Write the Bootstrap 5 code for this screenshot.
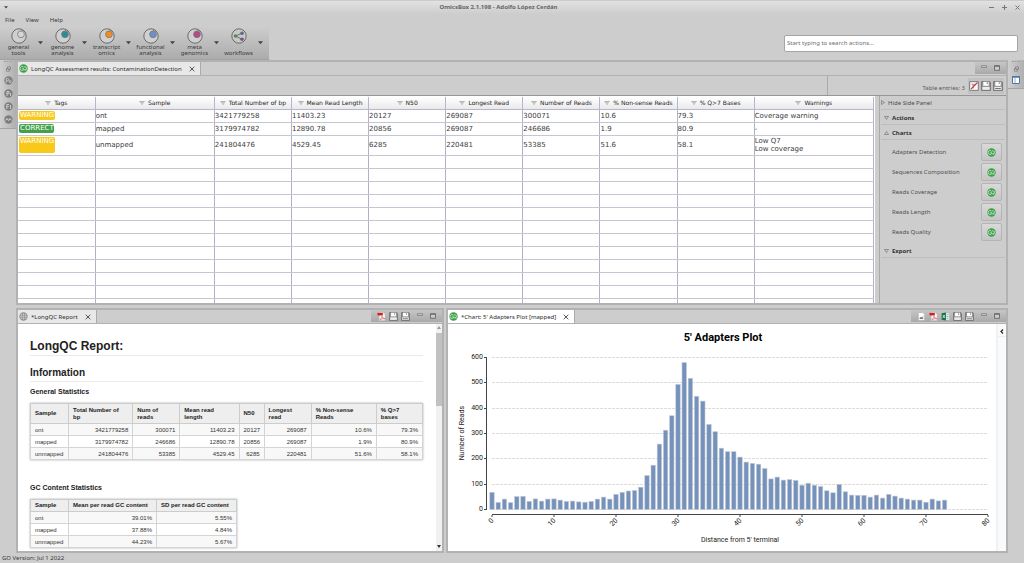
<!DOCTYPE html>
<html lang="en">
<head>
<meta charset="utf-8">
<meta name="viewport" content="width=device-width, initial-scale=1">
<title>OmicsBox 2.1.198 - Adolfo López Cerdán</title>
<link rel="stylesheet" href="https://cdn.jsdelivr.net/npm/bootstrap@5.3.0/dist/css/bootstrap.min.css">
<style>
:root{--ui:"Noto Sans","Open Sans",sans-serif;--bg:#cdcdcd;--edge:#b2b2b2}
body{font:6px/10px var(--ui);color:#3a3a3a;background:var(--bg);min-height:100vh}
button{border:0;background:none;padding:0;color:inherit;font:inherit;line-height:inherit}
svg{display:block;flex:none}
.titlebar{height:14px;background:linear-gradient(#b5b5b5 0,#e2e2e2 1px,#cdcdcd);color:#666;font-weight:700}
.menubar{height:12px;padding-left:5px;gap:11px}
.menubar a,.menubar a:hover{color:#3a3a3a;text-decoration:none}
.toolrow{height:34px}
.tools{background:linear-gradient(#cdcdcd,#acacac);border-bottom:1px solid #a2a2a2;height:33px;margin-top:1px;padding:0 3px 0 2px}
.tool{width:33px;line-height:6px;padding-top:1px}
.tool span{height:12px}
.dropper{width:11px}
.search{width:234px;height:17px;border:1px solid #a5a5a5;border-radius:2px;padding:0 2px;font:6px/10px var(--ui);color:#555;background:#fff;margin-right:6px}
.search::placeholder{color:#6e6e6e;opacity:1}
main{display:grid;grid-template-columns:16px 1fr 16px;flex:1 1 0;min-height:0}
.strip{background:linear-gradient(90deg,#cfcfcf,#b0b0b0);border-bottom:1px solid #a2a2a2;gap:4px;padding-top:1px;align-self:start}
.grip{width:8px;border-top:1px dotted #999;height:0}
.work{display:grid;grid-template-columns:428fr 562fr;grid-template-rows:1fr 1fr;gap:3px 2px;min-width:0;min-height:0}
.pane{border:2px solid var(--edge);min-width:0;min-height:0;overflow:hidden}
.pane-wide{grid-column:1/-1}
.tabs{height:14px;border-bottom:1px solid #b2b2b2;flex:none}
.tab-on{background:#e8e8e8;border-right:1px solid #aaa;height:13px;padding:0 5px 0 1px;gap:3px;color:#2c2c2c}
.tab-white{background:#fff}
.tab-tools{background:linear-gradient(#c6c6c6,#a9a9a9);height:12px;padding:0 6px 0 6px;gap:3px}
.tab-tools.far{gap:7px}
.entries{height:20px;border-bottom:1px solid #969696;flex:none}
.entries-in{width:179px;border-left:1px solid #aaa;gap:3px;padding-right:2px;color:#5a5a5a}
.entries-in .set{background:#c2c2c2;height:16px;padding:0 1px;gap:2px}
.gridpane{background:#fff;padding:1px 1px 0 0;min-width:0}
.results{width:100%;table-layout:fixed;font:7px/8px "DejaVu Sans",sans-serif;color:#3c3c3c;border-collapse:collapse}
.results th{height:12px;font:6px/8px "DejaVu Sans",sans-serif;text-align:center;background:linear-gradient(#fff,#e9e9e9);border:1px solid #b5b7cc;border-width:0 1px 1px 0;padding:0;white-space:nowrap;color:#1c1c1c}
.results th svg{display:inline-block;margin-right:3px;vertical-align:baseline}
.results td{height:13px;border:1px solid #c6c6d3;border-right-color:#b0b2cc;border-width:0 1px 1px 0;padding:0;white-space:nowrap}
.results td:first-child{padding-left:1px}
.results tr.tall td{height:20px}
.pill{display:block;width:36px;height:9px;border-radius:2px;color:#fff;line-height:8px;padding-left:1px;background:#f8c91a}
.pill.ok{background:#43a04c;width:35px}
.tall .pill{height:16px}
.vbar{width:3px;background:#777;margin:2px 4px 1px 0;border-radius:2px}
.side{width:127px;border-left:1px solid #aaa;padding:0 1px;color:#505050;flex:none}
.side .fold{height:15px;border-bottom:1px solid #bdbdbd;width:100%;text-align:left;gap:3px;color:#333;font-weight:700;padding:2px 0 0 3px}
.side .hide{height:14px;font-weight:400;color:#4c4c4c;padding:0}
.plots{padding:3px 3px 2px 11px;gap:2px}
.plots button{width:21px;height:18px;border:1px solid #b4b4b4;border-radius:2px;background:linear-gradient(#d9d9d9,#c6c6c6)}
.report{font:6px/8px "Liberation Sans",Arial,sans-serif;color:#333;padding:14px 13px 0 12px;min-width:0;overflow:hidden}
.report h1,.report h2,.report h3{margin:0;font-weight:700;color:#222}
.report h1{font-size:12px;line-height:16px;border-bottom:1px solid #eaeaea;padding-bottom:1px}
.report h2{font-size:10px;line-height:12px;border-bottom:1px solid #eaeaea;margin-top:11px;padding-bottom:2px}
.report h3{font-size:7px;line-height:9px;margin-top:5px}
.stats{border-collapse:collapse;border:1px solid #ccc;box-shadow:0 0 2px #aaa;margin-top:7px;table-layout:fixed}
.stats th{background:#eee;font-size:6px;line-height:7px;padding:1px 4px;border:1px solid #ccc;color:#222;height:12px;white-space:nowrap}
.stats td{height:12px;border:1px solid #d4d4d4;padding:0 4px;text-align:right;line-height:8px}
.stats tr:nth-child(odd) td{background:#f8f8f8}
.stats td:first-child{text-align:left}
.stats .deep th{height:20px}
.stats+h3{margin-top:23px}
.sbar{width:8px;background:#f1f1f1;padding:2px 0 3px}
.sbar i{display:block;flex:0 0 33%;background:#c1c1c1;width:6px}
.chartpane{background:#fff}
.rail{width:10px;border-left:2px solid #f1f1f1;background:#f9fafb;padding-top:2px;flex:none}
.rail button{height:11px;border-bottom:1px solid #eee}
.chart text{font:7px Roboto,sans-serif;fill:#222}
.chart .ttl{font:700 11px Roboto,sans-serif;fill:#000}
footer{height:10px;padding-left:2px;flex:none}
</style>
<script src="https://cdn.jsdelivr.net/npm/bootstrap@5.3.0/dist/js/bootstrap.bundle.min.js"></script>
</head>
<body class="d-flex flex-column vh-100 overflow-hidden">
<svg width="0" height="0" class="position-absolute" aria-hidden="true">
<defs>
<symbol id="flt" viewBox="0 0 7 5"><path d="M0 .5h7M1.200 2.200h4.600M2.400 3.900h2.200" stroke="#888" stroke-width=".8"/></symbol>
<symbol id="car" viewBox="0 0 6 4"><path d="M0 0h6L3 3.400z" fill="#444"/></symbol>
<symbol id="x" viewBox="0 0 6 6"><path d="M.700.700l4.600 4.600M5.300.700L.700 5.300" stroke="#555" stroke-width="1"/></symbol>
<symbol id="gq" viewBox="0 0 10 10"><circle cx="5" cy="5" r="4.700" fill="#3f9f4b"/><path d="M4.800 3.200A2.200 2.200 0 1 0 4.900 6.600V5.100H3.700M5.200 4a1.700 1.700 0 1 1 .4 2.200M7 5.800l1.200 1.500" fill="none" stroke="#e4f3e5" stroke-width=".8"/></symbol>
<symbol id="globe" viewBox="0 0 10 10"><circle cx="5" cy="5" r="4.600" fill="#8c8c8c"/><path d="M5 1v8M1 5h8M3 1.700q-1.600 3.300 0 6.600M7 1.700q1.600 3.300 0 6.600M1.700 3h6.600M1.700 7h6.600" fill="none" stroke="#ddd" stroke-width=".5"/></symbol>
<symbol id="sv" viewBox="0 0 10 10"><path d="M.600.600h8l.8.800v8H.600z" fill="#999" stroke="#6e6e6e" stroke-width=".9"/><path d="M2.300.800h5.400v4H2.300z" fill="#fff"/><path d="M5.700 1.300h1v1.800h-1z" fill="#777"/><path d="M1.400 6h7.200v2.800H1.400z" fill="#ededed"/></symbol>
<symbol id="sva" viewBox="0 0 10 10"><use href="#sv" width="10" height="10"/><path d="M2.200 7.500h5.600" stroke="#555" stroke-width=".8"/></symbol>
<symbol id="pdf" viewBox="0 0 10 10"><path d="M2.500.500h4.500l2 2v7H2.500z" fill="#f6f6f6" stroke="#bbb" stroke-width=".5"/><path d="M.500 1h6v2.800h-6z" fill="#d41f1f"/><path d="M3.500 8.500Q6 6 5.500 4.500q0 2.500 3.500 3-3-.6-5.500 1z" fill="none" stroke="#e05a5a" stroke-width=".7"/></symbol>
<symbol id="xls" viewBox="0 0 10 10"><path d="M4.500 1h5v8h-5z" fill="#eef4ef" stroke="#9ab" stroke-width=".5"/><path d="M6 3h2.500M6 5h2.500M6 7h2.500" stroke="#4a8" stroke-width=".7"/><path d="M.700 1.300L5.500.500v9L.700 8.700z" fill="#1f7246"/><path d="M2 3.300l2.400 3.400M4.400 3.300L2 6.700" stroke="#fff" stroke-width=".8"/></symbol>
<symbol id="doc" viewBox="0 0 10 10"><path d="M1.500.500h5l2 2v7h-7z" fill="#fff" stroke="#aaa" stroke-width=".7"/><path d="M3 6.800l1.500-.8 1 .3 1.500-1.300M3 7.300h4" fill="none" stroke="#444" stroke-width=".8"/></symbol>
<symbol id="clr" viewBox="0 0 10 10"><path d="M.700.700h8.600v8.600H.700z" fill="#fff" stroke="#777" stroke-width="1"/><path d="M1.800 2.800h5.400L5 5.300v2l-1.200.5V5.300z" fill="#aaa"/><path d="M2 8L8.500 1.500" stroke="#d33" stroke-width="1.100"/></symbol>
<symbol id="min" viewBox="0 0 6 6"><path d="M.500.800h5v1.600h-5z" fill="#ddd" stroke="#777" stroke-width=".8"/></symbol>
<symbol id="max" viewBox="0 0 6 6"><path d="M.500.700h5v4.600h-5z" fill="#ccc" stroke="#666" stroke-width=".9"/><path d="M.500 1.200h5" stroke="#666" stroke-width="1"/></symbol>
<symbol id="res" viewBox="0 0 6 6"><path d="M2 .500h3.500v2.800H2zM.500 2.700H4v2.800H.500z" fill="#ddd" stroke="#666" stroke-width=".8"/></symbol>
</defs>
</svg>

<header>
<div class="titlebar d-flex align-items-center px-1">
<svg width="4" height="3" class="me-auto"><use href="#car"/></svg>
<span>OmicsBox 2.1.198 - Adolfo López Cerdán</span>
<div class="ms-auto d-flex gap-2">
<button aria-label="Minimize"><svg width="5" height="5"><path d="M0 2.500h5" stroke="#777"/></svg></button>
<button aria-label="Maximize"><svg width="5" height="5"><path d="M0 2.500h5M2.500 0v5" stroke="#777"/></svg></button>
<button aria-label="Close"><svg width="5" height="5"><path d="M.500.500l4 4M4.500.500l-4 4" stroke="#777"/></svg></button>
</div>
</div>
<nav class="menubar d-flex align-items-center"><a href="#">File</a><a href="#">View</a><a href="#">Help</a></nav>
<div class="toolrow d-flex justify-content-between align-items-center">
<div class="tools d-flex" id="tools"></div>
<input class="search" type="text" placeholder="Start typing to search actions..." aria-label="Search actions">
</div>
</header>

<main>
<aside class="strip d-flex flex-column align-items-center pb-1">
<div class="grip"></div>
<button aria-label="Restore"><svg width="5" height="6"><use href="#res"/></svg></button>
<button aria-label="Project"><svg width="9" height="9" viewBox="0 0 9 9"><circle cx="4.500" cy="4.500" r="4.200" fill="#7e7e7e"/><path d="M2.300 7V2.500h1.400a1 1 0 0 1 0 2.200H2.300" fill="none" stroke="#ddd" stroke-width=".7"/><circle cx="6.200" cy="5.600" r="1" fill="none" stroke="#ddd" stroke-width=".7"/></svg></button>
<button aria-label="Process"><svg width="9" height="9" viewBox="0 0 9 9"><circle cx="4.500" cy="4.500" r="4.200" fill="#7e7e7e"/><path d="M3 7V2.500h2v2.200H3M6.500 4v3" fill="none" stroke="#ddd" stroke-width=".8"/></svg></button>
<button aria-label="Files"><svg width="9" height="9" viewBox="0 0 9 9"><circle cx="4.500" cy="4.500" r="4.200" fill="#7e7e7e"/><path d="M2.800 7V2.500h2.400M2.800 4.600h2M6.500 3v4" fill="none" stroke="#ddd" stroke-width=".8"/></svg></button>
<button aria-label="Activity"><svg width="9" height="9" viewBox="0 0 9 9"><circle cx="4.500" cy="4.500" r="4.200" fill="#7e7e7e"/><path d="M1.500 5.500l1.500-2 1.500 2 1.500-2 1.500 2" fill="none" stroke="#ddd" stroke-width=".9"/></svg></button>
</aside>

<div class="work">
<section class="pane pane-wide d-flex flex-column">
<div class="tabs d-flex justify-content-between">
<div class="tab-on d-flex align-items-center"><svg width="9" height="9"><use href="#gq"/></svg><span>LongQC Assessment results: ContaminationDetection</span><button class="ps-1" aria-label="Close tab"><svg width="6" height="6"><use href="#x"/></svg></button></div>
<div class="tab-tools far d-flex align-items-center"><button aria-label="Minimize"><svg width="6" height="6"><use href="#min"/></svg></button><button aria-label="Maximize"><svg width="6" height="6"><use href="#max"/></svg></button></div>
</div>
<div class="entries d-flex justify-content-end"><div class="entries-in d-flex align-items-center justify-content-end"><span class="pt-1">Table entries: 3</span><div class="set d-flex align-items-center"><button aria-label="Clear filter"><svg width="10" height="10"><use href="#clr"/></svg></button><button aria-label="Save"><svg width="10" height="10"><use href="#sv"/></svg></button><button aria-label="Save as"><svg width="10" height="10"><use href="#sva"/></svg></button></div></div></div>
<div class="d-flex flex-fill overflow-hidden">
<div class="gridpane flex-fill overflow-hidden">
<table class="results">
<colgroup><col style="width:77px"><col style="width:119px"><col style="width:77px"><col style="width:77px"><col style="width:77px"><col style="width:77px"><col style="width:77px"><col style="width:77px"><col style="width:77px"><col style="width:119px"></colgroup>
<thead><tr id="heads"></tr></thead><tbody id="rows"></tbody>
</table>
</div>
<div class="vbar"></div>
<aside class="side">
<button class="fold hide d-flex align-items-center"><svg width="4" height="5"><path d="M.500.500v4l3-2z" fill="none" stroke="#777" stroke-width=".7"/></svg>Hide Side Panel</button>
<button class="fold d-flex align-items-center"><svg width="5" height="4"><path d="M.500.500h4l-2 3z" fill="none" stroke="#777" stroke-width=".7"/></svg>Actions</button>
<button class="fold d-flex align-items-center"><svg width="5" height="4"><path d="M.500 3.500h4l-2-3z" fill="none" stroke="#777" stroke-width=".7"/></svg>Charts</button>
<div class="plots d-flex flex-column" id="plots"></div>
<button class="fold d-flex align-items-center"><svg width="5" height="4"><path d="M.500.500h4l-2 3z" fill="none" stroke="#777" stroke-width=".7"/></svg>Export</button>
</aside>
</div>
</section>

<section class="pane d-flex flex-column">
<div class="tabs d-flex justify-content-between">
<div class="tab-on d-flex align-items-center"><svg width="9" height="9"><use href="#globe"/></svg><span>*LongQC Report</span><button class="ps-1" aria-label="Close tab"><svg width="6" height="6"><use href="#x"/></svg></button></div>
<div class="tab-tools d-flex align-items-center"><button aria-label="PDF"><svg width="9" height="9"><use href="#pdf"/></svg></button><button aria-label="Save"><svg width="9" height="9"><use href="#sv"/></svg></button><button aria-label="Save as"><svg width="9" height="9"><use href="#sva"/></svg></button><button class="ps-1" aria-label="Minimize"><svg width="6" height="6"><use href="#min"/></svg></button><button class="ps-1" aria-label="Maximize"><svg width="6" height="6"><use href="#max"/></svg></button></div>
</div>
<div class="d-flex flex-fill bg-white overflow-hidden">
<article class="report flex-fill">
<h1>LongQC Report:</h1>
<h2>Information</h2>
<h3>General Statistics</h3>
<table class="stats w-100">
<colgroup><col style="width:38px"><col style="width:64px"><col style="width:47px"><col style="width:59px"><col style="width:25px"><col style="width:47px"><col style="width:65px"><col style="width:46px"></colgroup>
<thead><tr class="deep"><th>Sample</th><th>Total Number of<br>bp</th><th>Num of<br>reads</th><th>Mean read<br>length</th><th>N50</th><th>Longest<br>read</th><th>% Non-sense<br>Reads</th><th>% Q&gt;7<br>bases</th></tr></thead>
<tbody>
<tr><td>ont</td><td>3421779258</td><td>300071</td><td>11403.23</td><td>20127</td><td>269087</td><td>10.6%</td><td>79.3%</td></tr>
<tr><td>mapped</td><td>3179974782</td><td>246686</td><td>12890.78</td><td>20856</td><td>269087</td><td>1.9%</td><td>80.9%</td></tr>
<tr><td>unmapped</td><td>241804476</td><td>53385</td><td>4529.45</td><td>6285</td><td>220481</td><td>51.6%</td><td>58.1%</td></tr>
</tbody></table>
<h3>GC Content Statistics</h3>
<table class="stats">
<colgroup><col style="width:38px"><col style="width:88px"><col style="width:80px"></colgroup>
<thead><tr><th>Sample</th><th>Mean per read GC content</th><th>SD per read GC content</th></tr></thead>
<tbody>
<tr><td>ont</td><td>39.01%</td><td>5.55%</td></tr>
<tr><td>mapped</td><td>37.88%</td><td>4.84%</td></tr>
<tr><td>unmapped</td><td>44.23%</td><td>5.67%</td></tr>
</tbody></table>
</article>
<div class="sbar d-flex flex-column align-items-center gap-1">
<svg width="4" height="3"><path d="M0 3h4L2 0z" fill="#999"/></svg><i></i><svg class="mt-auto" width="4" height="3"><path d="M0 0h4L2 3z" fill="#333"/></svg>
</div>
</div>
</section>

<section class="pane d-flex flex-column">
<div class="tabs d-flex justify-content-between">
<div class="tab-on tab-white d-flex align-items-center"><svg width="9" height="9"><use href="#gq"/></svg><span>*Chart: 5' Adapters Plot [mapped]</span><button class="ps-1" aria-label="Close tab"><svg width="6" height="6"><use href="#x"/></svg></button></div>
<div class="tab-tools d-flex align-items-center"><button aria-label="Image"><svg width="9" height="9"><use href="#doc"/></svg></button><button aria-label="PDF"><svg width="9" height="9"><use href="#pdf"/></svg></button><button aria-label="Excel"><svg width="9" height="9"><use href="#xls"/></svg></button><button aria-label="Save"><svg width="9" height="9"><use href="#sv"/></svg></button><button aria-label="Save as"><svg width="9" height="9"><use href="#sva"/></svg></button><button class="ps-1" aria-label="Minimize"><svg width="6" height="6"><use href="#min"/></svg></button><button class="ps-1" aria-label="Maximize"><svg width="6" height="6"><use href="#max"/></svg></button></div>
</div>
<div class="chartpane d-flex flex-fill overflow-hidden">
<svg class="chart flex-fill" id="chart" viewBox="1 0 548 227" role="img" aria-label="5' Adapters Plot"></svg>
<div class="rail d-flex flex-column align-items-stretch"><button class="d-flex align-items-center justify-content-center" aria-label="Expand"><svg width="4" height="5"><path d="M3 .500l-2 2 2 2" fill="none" stroke="#222" stroke-width="1.200"/></svg></button></div>
</div>
</section>
</div>

<aside class="strip d-flex flex-column align-items-center pb-1">
<div class="grip"></div>
<button aria-label="Restore"><svg width="5" height="6"><use href="#res"/></svg></button>
<button aria-label="Perspective"><svg width="8" height="8"><path d="M.500.500h7v7h-7z" fill="#fff" stroke="#4a7aa8"/><path d="M0 1h8" stroke="#4a7aa8" stroke-width="1.500"/><path d="M3 2v5" stroke="#9ab"/></svg></button>
</aside>
</main>
<footer>GO Version: Jul 1 2022</footer>

<script>
const el = id => document.getElementById(id);

// toolbar buttons: label and the colour of the inner dot
const tools = [["general<br>tools","#d6d6d6"],["genome<br>analysis","#2a8c96"],["transcript<br>omics","#f58a1f"],["functional<br>analysis","#6f8fcb"],["meta<br>genomics","#b54a86"],["workflows",null]];
const dot = c => `<circle cx="8" cy="8" r="7.200" fill="${c?"#d0d0d0":"#c8c8c8"}" stroke="#6b6b6b" stroke-width="1"/>` + (c
  ? `<circle cx="10" cy="6.300" r="3.400" fill="${c}" stroke="#777" stroke-width=".8"/><path d="M10.500 3l.6-2" stroke="#777" stroke-width=".8"/>`
  : `<path d="M4.500 8L11 5.200M4.500 8L11 11.300" stroke="#555" stroke-width=".8"/><circle cx="4.500" cy="8" r="1.800" fill="#4f8a5a"/><circle cx="11" cy="5.200" r="1.800" fill="#5d6690"/><circle cx="11" cy="11.300" r="1.800" fill="#77597c"/>`);
el("tools").innerHTML = tools.map(([t,c]) => `<button class="tool d-flex flex-column align-items-center"><svg width="16" height="16">${dot(c)}</svg><span class="d-flex flex-column justify-content-end"><b class="fw-normal">${t}</b></span></button><button class="dropper d-flex align-items-center justify-content-center" aria-label="More"><svg width="5" height="4"><use href="#car"/></svg></button>`).join("");

const heads = ["Tags","Sample","Total Number of bp","Mean Read Length","N50","Longest Read","Number of Reads","% Non-sense Reads","% Q&gt;7 Bases","Warnings"];
el("heads").innerHTML = heads.map(h => `<th><svg width="6" height="4"><use href="#flt"/></svg>${h}</th>`).join("");
const rows = [
 ["WARNING","ont","3421779258","11403.23","20127","269087","300071","10.6","79.3","Coverage warning"],
 ["CORRECT","mapped","3179974782","12890.78","20856","269087","246686","1.9","80.9","-"],
 ["WARNING","unmapped","241804476","4529.45","6285","220481","53385","51.6","58.1","Low Q7<br>Low coverage"]];
el("rows").innerHTML = rows.map((r,i) => `<tr${i==2?' class="tall"':''}>` + r.map((c,j) => `<td>${j?c:`<span class="pill${c=="CORRECT"?" ok":""}">${c}</span>`}</td>`).join("") + "</tr>").join("")
 + ("<tr>" + "<td></td>".repeat(10) + "</tr>").repeat(12);

el("plots").innerHTML = ["Adapters Detection","Sequences Composition","Reads Coverage","Reads Length","Reads Quality"].map((p,i) =>
 `<div class="d-flex align-items-center justify-content-between"><label for="plot${i}">${p}</label><button id="plot${i}" class="d-flex align-items-center justify-content-center"><svg width="9" height="9"><use href="#gq"/></svg></button></div>`).join("");

// bar chart
const reads = [66,26,39,25,49,50,30,40,31,39,40,35,30,31,28,27,30,39,47,39,58,66,71,73,86,132,173,256,311,368,492,578,516,445,426,334,305,240,226,226,205,185,180,177,160,119,126,114,116,113,94,102,94,89,72,64,97,68,55,54,54,47,55,43,58,51,43,39,35,35,27,39,32,35];
const X = v => 45 + v*6.2, Y = v => 185 - v*152/600;
let g = `<text class="ttl" x="276" y="17" text-anchor="middle">5' Adapters Plot</text>`;
for (let v=0; v<=600; v+=100) g += `<path d="M45 ${Math.round(Y(v))+.5}H541" stroke="#dcdcdc" stroke-dasharray="3 1"/><path d="M37 ${Math.round(Y(v))+.5}h3" stroke="#444"/><text x="36" y="${Math.round(Y(v))+2}" text-anchor="end">${v}</text>`;
g += `<path d="M39.500 33v153M45 190.500H541" stroke="#444" fill="none"/>`;
reads.forEach((v,i) => g += `<rect x="${(X(i)-2.2).toFixed(1)}" y="${Y(v).toFixed(1)}" width="4.400" height="${(185.5-Y(v)).toFixed(1)}" fill="#7592bd" stroke="#c3c9d2" stroke-width=".6"/>`);
for (let v=0; v<=80; v+=10) g += `<path d="M${X(v)} 191v2" stroke="#444"/><text transform="translate(${X(v)+2} 197) rotate(-45)" text-anchor="end">${v}</text>`;
g += `<text x="293" y="218" text-anchor="middle">Distance from 5' terminal</text><text transform="translate(17 109) rotate(-90)" text-anchor="middle">Number of Reads</text>`;
el("chart").innerHTML = g;
</script>
</body>
</html>
